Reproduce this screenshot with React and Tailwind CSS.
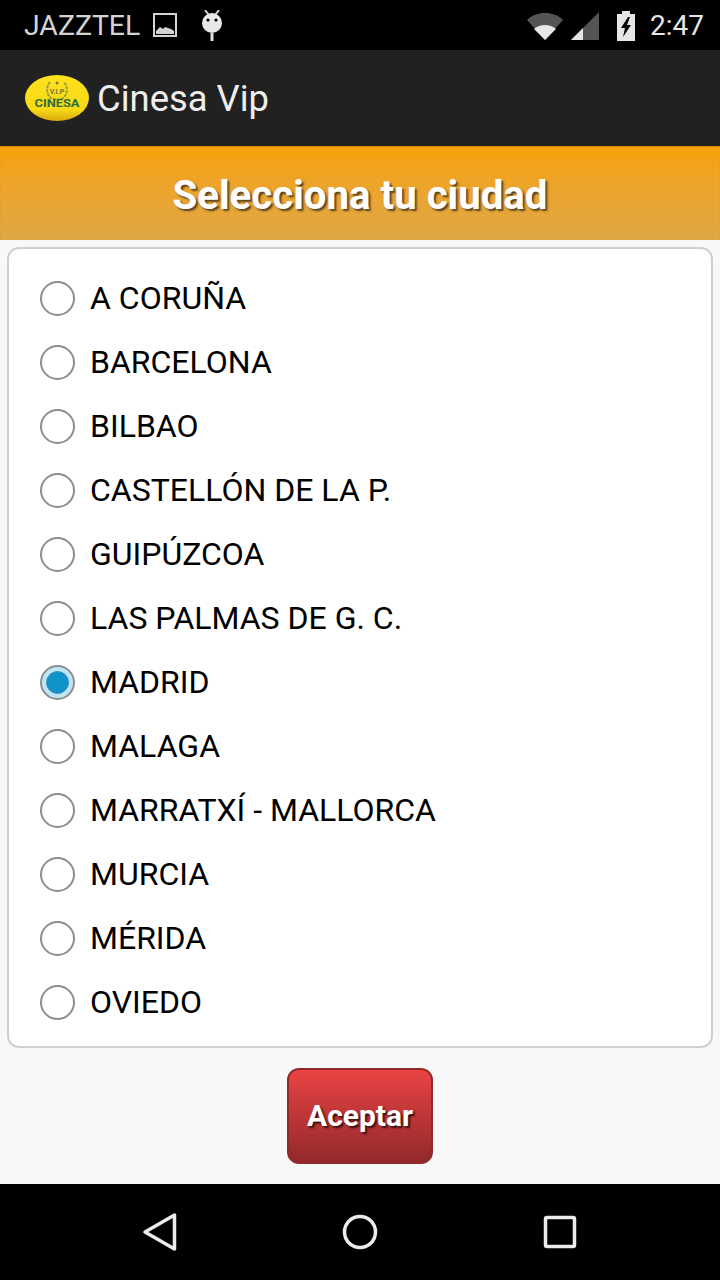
import React from "react";

const cities = [
  "A CORUÑA",
  "BARCELONA",
  "BILBAO",
  "CASTELLÓN DE LA P.",
  "GUIPÚZCOA",
  "LAS PALMAS DE G. C.",
  "MADRID",
  "MALAGA",
  "MARRATXÍ - MALLORCA",
  "MURCIA",
  "MÉRIDA",
  "OVIEDO",
];

const StatusBar = () => (
  <div className="h-[50px] bg-black flex items-center pl-6 pr-4 text-[#d4d4d4] shrink-0">
    <span className="text-[28.400px] leading-none font-normal mt-[3px]">JAZZTEL</span>
    <svg className="ml-[13px]" width="24" height="24" viewBox="0 0 24 24">
      <rect x="1" y="1" width="22" height="22" fill="none" stroke="#d4d4d4" strokeWidth="2" />
      <path d="M3 21v-3l4-4 3 2 2-2 3 1 3 1 3 2v3z" fill="#d4d4d4" />
    </svg>
    <svg className="ml-[23px] mb-[-1px]" width="24" height="32" viewBox="0 0 24 32">
      <path d="M5 0l3.500 4.500M19 0l-3.500 4.500" stroke="#d4d4d4" strokeWidth="2" />
      <circle cx="12" cy="13" r="10" fill="#e8e8e8" />
      <circle cx="8" cy="10" r="1.600" fill="#000" />
      <circle cx="16" cy="10" r="1.600" fill="#000" />
      <rect x="10.500" y="23" width="3" height="8" fill="#e0e0e0" />
    </svg>
    <div className="ml-auto flex items-center mt-[1px]">
      <svg width="36" height="30" viewBox="0 0 36 30">
        <path d="M0 9C5 4 11 2 18 2s13 2 18 7L18 29z" fill="#555" />
        <path d="M7 18c3-2.500 7-4 11-4s8 1.500 11 4L18 29z" fill="#e6e6e6" />
      </svg>
      <svg className="ml-[8px]" width="28" height="28" viewBox="0 0 28 28">
        <path d="M28 0v28H0z" fill="#555" />
        <path d="M12 16v12H0z" fill="#e6e6e6" />
      </svg>
      <svg className="ml-[17px]" width="20" height="30" viewBox="0 0 20 30">
        <path d="M6 0h8v3h5v27H1V3h5z" fill="#e6e6e6" />
        <path d="M12 6l-7 11h4l-2 9 8-12h-4l3-8z" fill="#000" />
      </svg>
      <span className="ml-[14px] text-[28px] leading-none text-[#e6e6e6]">2:47</span>
    </div>
  </div>
);

const Logo = () => (
  <svg width="66" height="48" viewBox="0 0 66 48">
    <defs>
      <linearGradient id="logoFill" x1="0" y1="0" x2="0" y2="1">
        <stop offset="0" stopColor="#ffe11c" />
        <stop offset="0.75" stopColor="#f7d916" />
        <stop offset="1" stopColor="#dba80f" />
      </linearGradient>
    </defs>
    <ellipse cx="33" cy="24" rx="32" ry="23" fill="url(#logoFill)" />
    <path d="M26 8c-4 5-4 12 1 16 3 2 9 2 12 0 5-4 5-11 1-16" fill="none" stroke="#9a9a3c" strokeWidth="2" strokeDasharray="3 1" />
    <circle cx="33" cy="9" r="1.500" fill="#7d7a32" />
    <text x="33" y="20" textAnchor="middle" fontSize="7" fontWeight="700" fill="#6a7a2c" fontFamily="Roboto, sans-serif">V.I.P</text>
    <text x="33" y="33" textAnchor="middle" fontSize="10.500" fontWeight="700" textLength="45" lengthAdjust="spacingAndGlyphs" fill="#2c6e3c" fontFamily="Roboto, sans-serif">CINESA</text>
  </svg>
);

const Radio = ({ checked }) => (
  <span
    className={
      checked
        ? "w-[35px] h-[35px] mb-[2px] rounded-full border-2 border-[#8e8e8e] bg-[#bfe6f5] flex items-center justify-center shrink-0"
        : "w-[35px] h-[35px] mb-[2px] rounded-full border-2 border-[#8e8e8e] bg-white shrink-0"
    }
  >
    {checked && <span className="w-[23px] h-[23px] rounded-full bg-[#0f93c9] border border-[#3f8fb5]" />}
  </span>
);

const NavBar = () => (
  <div className="h-[96px] bg-black flex items-center justify-center shrink-0">
    <div className="w-[436px] flex items-center justify-between">
      <svg width="36" height="40" viewBox="0 0 36 40">
        <path d="M32.500 3v34L3 20z" fill="none" stroke="#ececec" strokeWidth="3.500" strokeLinejoin="round" />
      </svg>
      <svg width="36" height="36" viewBox="0 0 36 36">
        <circle cx="18" cy="18" r="15.500" fill="none" stroke="#ececec" strokeWidth="3.500" />
      </svg>
      <svg width="36" height="36" viewBox="0 0 36 36">
        <rect x="3.500" y="3.500" width="29" height="29" rx="1.500" fill="none" stroke="#ececec" strokeWidth="3.500" />
      </svg>
    </div>
  </div>
);

export default function App() {
  return (
    <div className="w-[720px] h-[1280px] flex flex-col bg-[#f8f8f8] font-['Roboto',sans-serif] overflow-hidden">
      <StatusBar />
      <div className="h-[96px] bg-[#212121] flex items-center pl-6 shrink-0">
        <Logo />
        <span className="ml-[7px] mt-[2px] text-[36.400px] leading-none text-[#eeeeee]">Cinesa Vip</span>
      </div>
      <div className="h-[94px] shrink-0 flex items-center justify-center bg-gradient-to-b from-[#f8a100] to-[#dea844] [box-shadow:inset_0_1px_1px_#c98400]">
        <h1 className="mt-[7px] text-[40.200px] font-bold text-white [text-shadow:2px_2px_2px_#5a4320]">Selecciona tu ciudad</h1>
      </div>
      <div className="mx-[7px] mt-[7px] h-[801px] bg-white border-2 border-[#cfcfcf] rounded-[12px] pt-[18px] pl-[31px] shrink-0">
        {cities.map((city) => (
          <div key={city} className="h-[64px] flex items-center">
            <Radio checked={city === "MADRID"} />
            <span className="ml-[15px] mb-[2px] text-[32px] leading-none text-black">{city}</span>
          </div>
        ))}
      </div>
      <div className="flex-1 flex items-center justify-center">
        <button
          type="button"
          className="w-[146px] h-[96px] rounded-[12px] border-2 border-[#8f2b2b] bg-gradient-to-b from-[#ea4344] to-[#93292b] text-[30px] leading-none font-bold text-white [text-shadow:2px_2px_2px_#3a1010]"
        >
          Aceptar
        </button>
      </div>
      <NavBar />
    </div>
  );
}
